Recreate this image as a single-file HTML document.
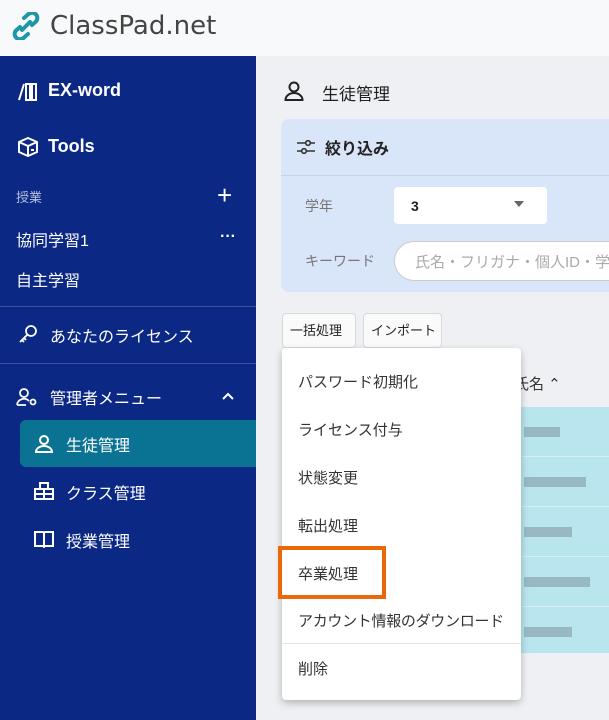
<!DOCTYPE html>
<html><head><meta charset="utf-8"><style>
*{margin:0;padding:0;box-sizing:border-box}
body{width:609px;height:720px;overflow:hidden;background:#eef0f3;font-family:"Liberation Sans","Noto Sans CJK JP",sans-serif;position:relative;color:#222}
.hdr{position:absolute;left:0;top:0;width:609px;height:56px;background:#f8f9fa}
.logo{position:absolute;left:50px;top:11px;font-size:26px;color:#444;font-family:"DejaVu Sans","Liberation Sans",sans-serif}
.side{position:absolute;left:0;top:56px;width:256px;height:664px;background:#0b2884;color:#fff}
.s{position:absolute;font-size:16px;color:#fff;white-space:nowrap}
.b{font-weight:bold;font-size:18px}
.hr{position:absolute;left:0;width:256px;height:1px;background:#3a54a0}
.act{position:absolute;left:20px;top:364px;width:236px;height:47px;background:#0a7393;border-radius:6px 0 0 6px}
.card{position:absolute;left:281px;top:119px;width:340px;height:173px;background:#d9e5f8;border-radius:8px}
.btn{position:absolute;top:313px;height:35px;background:#fafafa;border:1px solid #d6d9dd;border-radius:4px;font-size:13px;line-height:33px;padding:0 7px;color:#222;white-space:nowrap}
.menu{position:absolute;left:282px;top:348px;width:239px;height:352px;background:#fff;border-radius:4px;box-shadow:0 3px 8px rgba(0,0,0,.25)}
.mi{position:absolute;left:16px;font-size:15px;color:#333;white-space:nowrap}
.row{position:absolute;left:520px;width:89px;height:50px;background:#b9e5ee;border-bottom:1px solid #d7eef3}
.blur{position:absolute;left:4px;top:20px;height:10px;background:#8aa6b2;opacity:.7}
</style></head><body>
<div class="hdr">
<svg style="position:absolute;left:12px;top:12px" width="28" height="28" viewBox="0 0 28 28"><g fill="none" stroke="#1d97a8" stroke-width="4" stroke-linecap="round"><path d="M12 6 L16 2.5 a5 5 0 0 1 8 7 L20 13"/><path d="M16 22 L12 25.5 a5 5 0 0 1 -8 -7 L8 15"/><path d="M10 18 L18 10"/></g></svg>
<div class="logo">ClassPad.net</div>
</div>
<div class="side">
<svg style="position:absolute;left:18px;top:27px" width="20" height="18" viewBox="0 0 20 18" fill="none" stroke="#fff" stroke-width="2"><path d="M1 17 L6 1 M8 1v16h4V1zM14 1v16h4V1z"/></svg>
<div class="s b" style="left:48px;top:24px">EX-word</div>
<svg style="position:absolute;left:18px;top:81px" width="20" height="20" viewBox="0 0 20 20" fill="none" stroke="#fff" stroke-width="2"><path d="M10 1 L19 5 V15 L10 19 L1 15 V5Z M1 5 L10 9 L19 5 M10 9 V19 M13 13h3"/></svg>
<div class="s b" style="left:48px;top:80px">Tools</div>
<div class="s" style="left:16px;top:131px;font-size:13px;color:#b5bfdc">授業</div>
<div class="s" style="left:217px;top:126px;font-size:26px;font-weight:300;line-height:26px">+</div>
<div class="s" style="left:16px;top:171px">協同学習1</div>
<div class="s" style="left:220px;top:172px;font-weight:bold">···</div>
<div class="s" style="left:16px;top:211px">自主学習</div>
<div class="hr" style="top:250px"></div>
<svg style="position:absolute;left:18px;top:268px" width="20" height="20" viewBox="0 0 20 20" fill="none" stroke="#fff" stroke-width="1.8"><circle cx="13" cy="7" r="5"/><path d="M9 11 L2 18 M4 16 l2 2 M6 14 l2 2"/></svg>
<div class="s" style="left:50px;top:267px">あなたのライセンス</div>
<div class="hr" style="top:307px"></div>
<svg style="position:absolute;left:16px;top:331px" width="22" height="20" viewBox="0 0 22 20" fill="none" stroke="#fff" stroke-width="1.8"><circle cx="8" cy="6" r="4"/><path d="M1 18 a7 7 0 0 1 12 -4 M1 18h9"/><circle cx="17" cy="15" r="2.5"/></svg>
<div class="s" style="left:50px;top:329px">管理者メニュー</div>
<svg style="position:absolute;left:222px;top:336px" width="12" height="8" viewBox="0 0 12 8" fill="none" stroke="#fff" stroke-width="2"><path d="M1 7 L6 2 L11 7"/></svg>
<div class="act"></div>
<svg style="position:absolute;left:35px;top:379px" width="18" height="18" viewBox="0 0 18 18" fill="none" stroke="#fff" stroke-width="2"><circle cx="9" cy="5" r="4"/><path d="M1 17 a8 6 0 0 1 16 0Z"/></svg>
<div class="s" style="left:66px;top:376px">生徒管理</div>
<svg style="position:absolute;left:34px;top:426px" width="20" height="18" viewBox="0 0 20 18" fill="none" stroke="#fff" stroke-width="2"><path d="M6 1h8v6H6zM1 7h18v10H1zM10 7v10M1 12h18"/></svg>
<div class="s" style="left:66px;top:424px">クラス管理</div>
<svg style="position:absolute;left:34px;top:475px" width="20" height="17" viewBox="0 0 20 17" fill="none" stroke="#fff" stroke-width="2"><path d="M1 1h8l1 1 1-1h8v14h-8l-1 1-1-1H1zM10 2v14"/></svg>
<div class="s" style="left:66px;top:472px">授業管理</div>
</div>
<svg style="position:absolute;left:284px;top:81px" width="20" height="20" viewBox="0 0 20 20" fill="none" stroke="#222" stroke-width="2"><circle cx="10" cy="6" r="4.5"/><path d="M1.5 19 a8.5 7 0 0 1 17 0Z"/></svg>
<div style="position:absolute;left:322px;top:80px;font-size:17px;color:#222">生徒管理</div>
<div class="card">
<svg style="position:absolute;left:15px;top:21px" width="20" height="14" viewBox="0 0 20 14" fill="none" stroke="#333" stroke-width="1.6"><path d="M1 3h8M15 3h4M1 11h4M11 11h8"/><circle cx="12" cy="3" r="2.3"/><circle cx="8" cy="11" r="2.3"/></svg>
<div style="position:absolute;left:44px;top:16px;font-size:16px;font-weight:bold;color:#222">絞り込み</div>
<div style="position:absolute;left:0;top:56px;width:340px;height:1px;background:#c6d3ea"></div>
<div style="position:absolute;left:24px;top:77px;font-size:14px;color:#777">学年</div>
<div style="position:absolute;left:113px;top:68px;width:153px;height:37px;background:#fff;border-radius:4px"><span style="position:absolute;left:17px;top:11px;font-size:14px;font-weight:bold">3</span><span style="position:absolute;left:120px;top:14px;width:0;height:0;border:5px solid transparent;border-top:6px solid #666"></span></div>
<div style="position:absolute;left:24px;top:132px;font-size:14px;color:#777">キーワード</div>
<div style="position:absolute;left:113px;top:122px;width:240px;height:40px;background:#fff;border-radius:20px;border:1px solid #ccc"><span style="position:absolute;left:20px;top:9px;font-size:15px;color:#aaa;white-space:nowrap">氏名・フリガナ・個人ID・学</span></div>
</div>
<div class="btn" style="left:282px;width:74px">一括処理</div>
<div class="btn" style="left:363px;width:79px">インポート</div>
<div style="position:absolute;left:514px;top:373px;font-size:15px;color:#333">氏名 ⌃</div>
<div class="row" style="top:407px"><div class="blur" style="width:36px"></div></div>
<div class="row" style="top:457px"><div class="blur" style="width:62px"></div></div>
<div class="row" style="top:507px"><div class="blur" style="width:48px"></div></div>
<div class="row" style="top:557px"><div class="blur" style="width:66px"></div></div>
<div class="row" style="top:607px;height:46px;border:0"><div class="blur" style="width:48px"></div></div>
<div class="menu">
<div class="mi" style="top:23px">パスワード初期化</div>
<div class="mi" style="top:71px">ライセンス付与</div>
<div class="mi" style="top:119px">状態変更</div>
<div class="mi" style="top:167px">転出処理</div>
<div class="mi" style="top:215px">卒業処理</div>
<div class="mi" style="top:262px;letter-spacing:-0.3px">アカウント情報のダウンロード</div>
<div style="position:absolute;left:0;top:295px;width:239px;height:1px;background:#e5e5e5"></div>
<div class="mi" style="top:310px">削除</div>
</div>
<div style="position:absolute;left:278px;top:546px;width:108px;height:53px;border:4px solid #e8680a"></div>
</body></html>
